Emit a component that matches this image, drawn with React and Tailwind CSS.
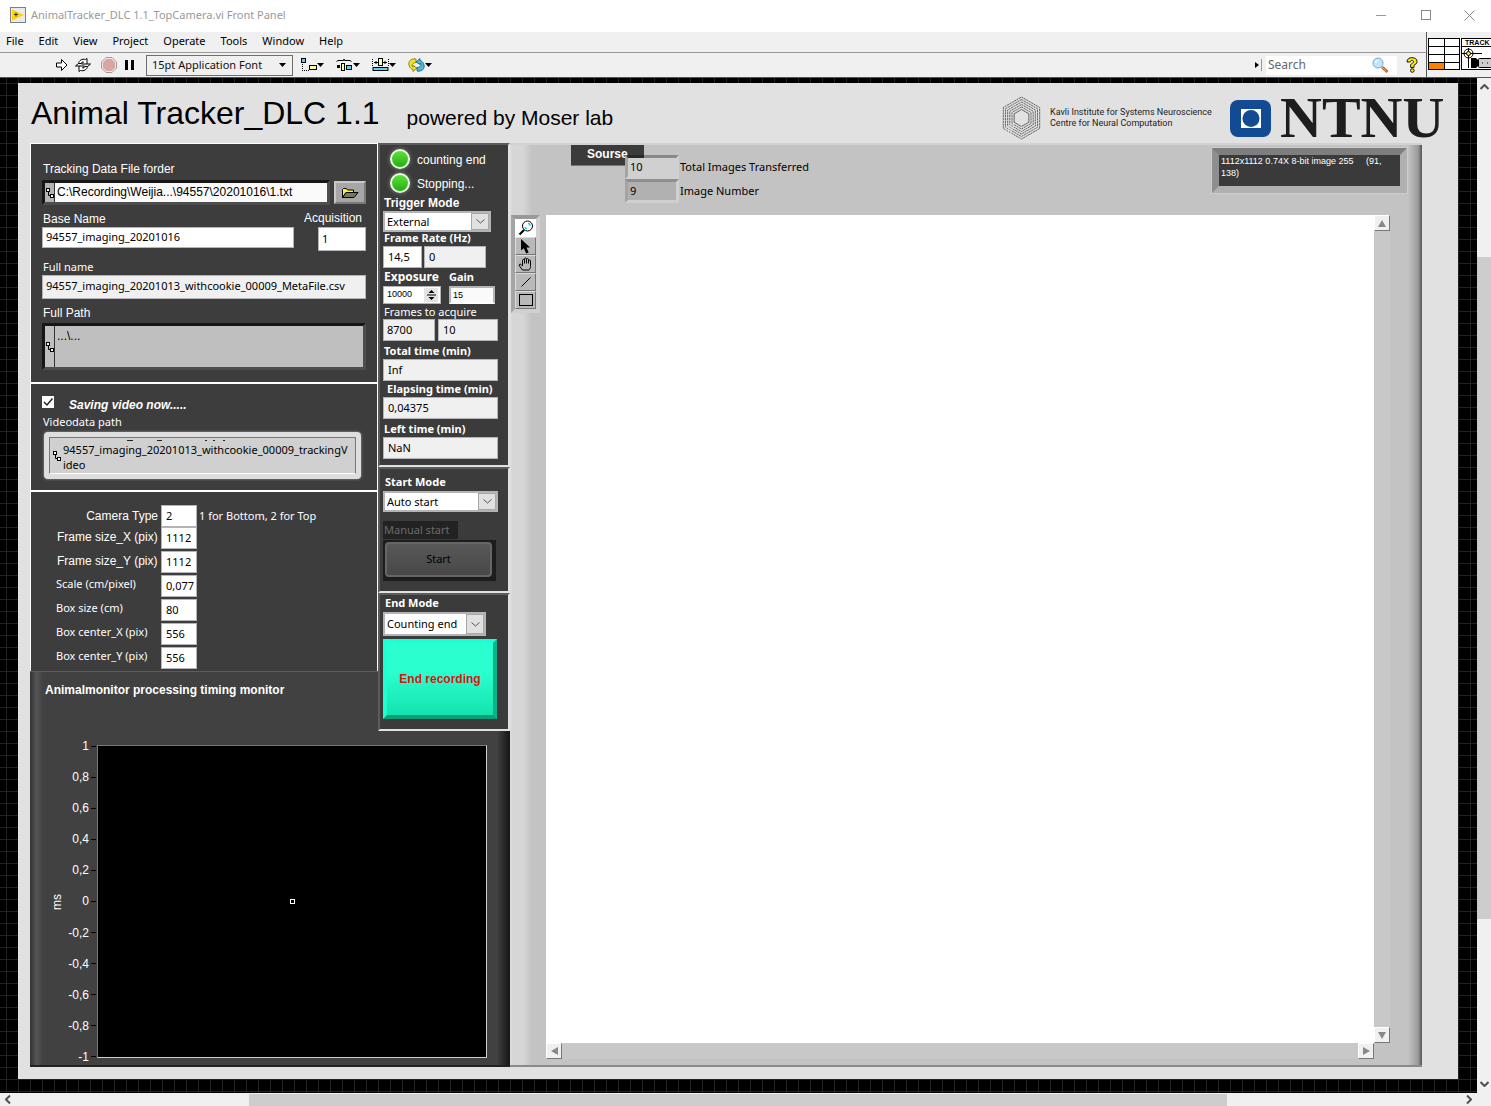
import React from "react";

const UI = "font-['Noto_Sans','Open_Sans',sans-serif]";
const ARIAL = "font-['Liberation_Sans',Arial,sans-serif]";

function TextField({ label, value, className = "", readOnly = false }) {
  return (
    <input
      aria-label={label}
      defaultValue={value}
      readOnly={readOnly}
      className={`min-w-0 rounded-none border border-[#b4b4b8] pb-0.5 text-[11px] text-black outline-none ${readOnly ? "bg-[#f0f0f0]" : "bg-white"} ${className}`}
    />
  );
}

function Select({ id, value, className = "" }) {
  return (
    <div className={`relative flex border-2 border-[#b4b4b8] bg-white ${className}`}>
      <select id={id} defaultValue={value} className="min-h-0 w-full appearance-none bg-white pl-0.5 text-[11px] leading-4 text-black outline-none">
        <option>{value}</option>
      </select>
      <span className="pointer-events-none absolute inset-y-0 right-0 flex w-[18px] items-center justify-center border border-[#a8a8a8] bg-[#e1e1e1]">
        <svg width="9" height="5" viewBox="0 0 9 5" fill="none" stroke="#555">
          <path d="M.5 .5 4.500 4 8.500 .5" />
        </svg>
      </span>
    </div>
  );
}

function PathGlyph() {
  return (
    <svg width="8" height="12" viewBox="0 0 8 12" fill="#fff" stroke="#000" className="shrink-0">
      <path d="M2.500 4v4.500H5" fill="none" />
      <rect x=".5" y="1.500" width="3" height="3" />
      <rect x="4.500" y="7.500" width="3" height="3" />
    </svg>
  );
}

function DropArrow() {
  return (
    <svg width="7" height="4" viewBox="0 0 7 4">
      <path d="M0 0h7L3.500 4z" />
    </svg>
  );
}

function TitleBar() {
  return (
    <header className="flex h-8 items-center bg-white pb-0.5 pl-2.5">
      <svg width="16" height="16" viewBox="0 0 16 16">
        <rect x=".5" y=".5" width="15" height="15" fill="#e9e9ee" stroke="#7c7f88" />
        <path d="M2 2.500 14 8 2 13.500z" fill="#ffd200" />
        <path d="M4 7.500h4M6 5.500v4" stroke="#333" />
      </svg>
      <h1 className="ml-[5px] text-[11px] text-[#999]">AnimalTracker_DLC 1.1_TopCamera.vi Front Panel</h1>
      <div className="ml-auto flex">
        <button aria-label="Minimize" className="flex h-[30px] w-[45px] items-center justify-center">
          <svg width="10" height="10" stroke="#999"><path d="M0 5.500h10" /></svg>
        </button>
        <button aria-label="Maximize" className="flex h-[30px] w-[45px] items-center justify-center">
          <svg width="10" height="10" stroke="#888" fill="none"><rect x=".5" y=".5" width="9" height="9" /></svg>
        </button>
        <button aria-label="Close" className="flex h-[30px] w-[43px] items-center justify-center">
          <svg width="11" height="11" stroke="#888"><path d="M.5 .5l10 10M10.500 .5l-10 10" /></svg>
        </button>
      </div>
    </header>
  );
}

function Toolbar() {
  return (
    <div className="flex h-6 items-center bg-[#f0f0f0] pl-14">
      <button aria-label="Run" className="flex">
        <svg width="12" height="14" viewBox="0 0 12 14" fill="#fff" stroke="#000">
          <path d="M.5 5h5V1.500L11 7 5.500 12.500V9H.5z" />
        </svg>
      </button>
      <button aria-label="Run continuously" className="ml-[7px] flex">
        <svg width="16" height="14" viewBox="0 0 16 14" fill="#fff" stroke="#000">
          <path d="M3.500 5.500C4 2.500 7 .5 10.500 1.500L12 .5V6H6.500L8.500 4C7.500 3.500 6.500 4.500 6 5.500z" />
          <path d="M12.500 8.500C12 11.500 9 13.500 5.500 12.500L4 13.500V8H9.500L7.500 10c1 .5 2-.5 2.500-1.500z" />
          <path d="M3.500 5.500.5 8H4M12.500 8.500 15.500 6H12" />
        </svg>
      </button>
      <button aria-label="Abort execution" className="ml-[10px] flex">
        <svg width="16" height="16" viewBox="0 0 16 16">
          <path d="M5 .5h6L15.500 5v6L11 15.500H5L.5 11V5z" fill="#f4e4e4" stroke="#a09a9a" />
          <path d="M5.500 2h5L14 5.500v5L10.500 14h-5L2 10.500v-5z" fill="#d8a4a4" />
        </svg>
      </button>
      <button aria-label="Pause" className="ml-2 flex gap-[3px]">
        <span className="h-2.5 w-[3px] bg-black" />
        <span className="h-2.5 w-[3px] bg-black" />
      </button>
      <div className="relative ml-3 flex h-[21px] w-[147px] border border-[#6e6e6e]">
        <select aria-label="Font" className="w-full appearance-none bg-[#f0f0f0] pl-[5px] text-[11px] leading-[18px] text-[#111] outline-none">
          <option>15pt Application Font</option>
        </select>
        <span className="pointer-events-none absolute inset-y-0 right-1.5 flex items-center"><DropArrow /></span>
      </div>
      <button aria-label="Align objects" className="ml-2 flex items-center">
        <svg width="16" height="14" viewBox="0 0 16 14">
          <path d="M1.500 6v8M3 12.500h5" stroke="#000" strokeDasharray="1 1" />
          <rect x=".5" y=".5" width="4" height="4" fill="#6ce" stroke="#000" />
          <rect x="8.500" y="7.500" width="7" height="4" fill="#ff9" stroke="#000" />
        </svg>
        <DropArrow />
      </button>
      <button aria-label="Distribute objects" className="ml-3 flex items-center">
        <svg width="17" height="14" viewBox="0 0 17 14">
          <path d="M.5 3.500 2 2.500h5.500L8 1l.5 1.500H14l1.500 1" fill="none" stroke="#000" />
          <rect x="1" y="7" width="3" height="3" />
          <rect x="5.500" y="5.500" width="3" height="7" fill="#ff9" stroke="#000" />
          <rect x="10.500" y="7.500" width="5" height="4" fill="#6ce" stroke="#000" />
        </svg>
        <DropArrow />
      </button>
      <button aria-label="Resize objects" className="ml-3 flex items-center">
        <svg width="17" height="14" viewBox="0 0 17 14">
          <path d="M.5 1v8M16.500 1v8" stroke="#000" strokeDasharray="1 1" />
          <path d="M2 4.500h4M11 4.500h4M4 3v3M13 3v3" stroke="#000" />
          <rect x="6.500" y=".5" width="4" height="7" fill="#ff9" stroke="#000" />
          <rect x="1" y="9.500" width="15" height="3" fill="#6ce" stroke="#000" />
        </svg>
        <DropArrow />
      </button>
      <button aria-label="Reorder" className="ml-3 flex items-center">
        <svg width="17" height="14" viewBox="0 0 17 14">
          <path d="M8 1C3 0 0 3.500 1 7s3 4.500 4 4.500V13.500L9 10 5 7.500V9C3.500 8 3.500 5 8 4.500z" fill="#f4e21c" stroke="#776b00" strokeWidth=".8" />
          <path d="M9 13c5 1 8-2.500 7-6s-3-4.500-4-4.500V.5L8 4l4 2.500V5c1.500 1 1.500 4-3 4.500z" fill="#4cb8d8" stroke="#155a70" strokeWidth=".8" />
        </svg>
        <DropArrow />
      </button>
      <div className="ml-auto flex items-center pr-2">
        <svg width="4" height="6"><path d="M0 0v6l4-3z" /></svg>
        <span className="mr-1 ml-0.5 h-3 w-px bg-[#999]" />
        <div className="flex h-[19px] w-[131px] items-center bg-white pr-2">
          <input aria-label="Search" placeholder="Search" className="w-full min-w-0 pl-0.5 text-[12px] outline-none placeholder:text-[#666]" />
          <svg width="17" height="17" viewBox="0 0 17 17" className="shrink-0">
            <path d="M10 10l5.500 5" stroke="#b0622c" strokeWidth="3" />
            <path d="M9.500 9.500l5 5" stroke="#f0b080" strokeWidth="1" />
            <circle cx="6" cy="6" r="5" fill="#bfe6fb" stroke="#7da7c6" />
            <path d="M3.500 6A2.500 2.500 0 0 1 6 3.500" stroke="#fff" fill="none" />
          </svg>
        </div>
        <button aria-label="Help" className="ml-[9px] flex">
          <svg width="12" height="16" viewBox="0 0 12 16" fill="#ffec00" stroke="#000" strokeWidth=".9">
            <path d="M1 5C1 2 3 .7 6 .7S11 2 11 4.500 9.500 7 8 8.300V10.500H4.700V7.500C6 6.500 7.500 6 7.500 4.500S4.300 3 4.300 5z" />
            <circle cx="6.300" cy="13.500" r="1.800" />
          </svg>
        </button>
      </div>
    </div>
  );
}

function VIIcon() {
  return (
    <div className="flex w-[65px] shrink-0 items-start border-l border-[#555] bg-[#f0f0f0] pt-1.5 pl-px">
      <svg width="63" height="33" viewBox="0 0 63 33" className="block">
        <rect x=".5" y=".5" width="31" height="31" fill="#fff" stroke="#000" />
        <rect x="1" y="25" width="15" height="6" fill="#ff8000" />
        <path d="M.5 8.500h31M.5 16.500h31M.5 24.500h31M16.500 .5v31M0 31.500h32" stroke="#000" />
        <rect x="33.500" y=".5" width="31" height="31" fill="#fff" stroke="#000" />
        <path d="M33 8.500h31M34 15.500h20M40.500 10v20" stroke="#000" />
        <circle cx="40.500" cy="15.500" r="4.500" fill="none" stroke="#000" />
        <circle cx="40.500" cy="15.500" r="2" fill="#ffe45c" stroke="#000" />
        <path d="M43 20h5l2 2v6l-2 2h-5z" />
        <rect x="50.500" y="20.500" width="13" height="9" rx="1" fill="#ccc" stroke="#000" />
        <path d="M54 25h1M59 25h1" stroke="#000" />
        <text x="37" y="7" fontSize="7" fontWeight="bold" fontFamily="Liberation Sans, sans-serif">TRACK</text>
      </svg>
    </div>
  );
}

function KavliLogo() {
  const rings = [21, 18.5, 16, 13.5, 11, 8.5];
  const hex = (r) =>
    [90, 30, -30, -90, -150, 150]
      .map((a) => `${20.5 + r * Math.cos((a * Math.PI) / 180)},${22 - r * Math.sin((a * Math.PI) / 180)}`)
      .join(" ");
  return (
    <svg width="41" height="44" viewBox="0 0 41 44" fill="none" stroke="#555" strokeWidth=".9">
      {rings.map((r) => (
        <polygon key={r} points={hex(r)} strokeDasharray={r > 9 ? "2.2 .6" : "none"} />
      ))}
      <path d="M5 31v5M7.500 30v7M10 28v10M12.500 27v6" stroke="#e1e1e1" />
    </svg>
  );
}

function PanelHeader() {
  return (
    <div className="flex h-[60px] items-center pl-px">
      <h2 className="text-[32px] leading-[60px] text-black">Animal Tracker_DLC 1.1</h2>
      <p className="ml-[27px] pt-2.5 text-[21px] text-black">powered by Moser lab</p>
      <div className="ml-auto flex items-center pt-2.5">
        <KavliLogo />
        <p className="ml-2 w-[180px] font-['Roboto',sans-serif] text-[9px] leading-[11px] whitespace-nowrap text-[#222]">
          Kavli Institute for Systems Neuroscience
          <br />
          Centre for Neural Computation
        </p>
        <svg width="41" height="37" viewBox="0 0 41 37">
          <rect width="41" height="37" rx="8" fill="#124a93" />
          <rect x="11" y="9" width="20" height="19" fill="#fff" />
          <circle cx="21" cy="18.500" r="8.500" fill="#124a93" />
        </svg>
        <span className="ml-[9px] w-[178px] font-['Liberation_Serif',serif] text-[58px] leading-[40px] font-bold text-[#1d1d1d]">NTNU</span>
      </div>
    </div>
  );
}

const whiteField = "border border-[#b4b4b8] bg-white pb-0.5 text-[11px] text-black outline-none";

function FileSettings() {
  return (
    <section className="border-t border-r border-b-2 border-l border-white bg-[#3d3d3d] pt-[18px] pr-[11px] pb-3 pl-[11px] text-white">
      <label htmlFor="folder" className={`block h-3.5 pl-px text-[12px] leading-[14px] ${ARIAL}`}>Tracking Data File forder</label>
      <div className="mt-1 flex items-center">
        <div className="flex h-[25px] flex-1 border-[3px] border-t-[#161616] border-r-[#4d4d4d] border-b-[#4d4d4d] border-l-[#161616] bg-[#b4b4b4]">
          <span className="flex w-[10px] shrink-0 items-center justify-center border-r border-[#333]"><PathGlyph /></span>
          <input id="folder" defaultValue="C:\Recording\Weijia...\94557\20201016\1.txt" className={`w-full min-w-0 bg-[#fafafa] pb-0.5 pl-0.5 text-[12px] text-black outline-none ${ARIAL}`} />
        </div>
        <button aria-label="Browse" className="ml-1 flex h-[23px] w-8 items-center justify-center border-2 border-t-[#c8c8c8] border-r-[#7a7a7a] border-b-[#7a7a7a] border-l-[#c8c8c8] bg-[#a6a6a6]">
          <svg width="18" height="12" viewBox="0 0 18 12" stroke="#000">
            <path d="M1.500 10.500v-8l1-1h3l1 1.500h6v2.500H5z" fill="#ffee3a" />
            <path d="M1.500 10.500 5 5.500h12l-4 5z" fill="#777a50" />
          </svg>
        </button>
      </div>
      <div className="mt-1.5 flex items-start justify-between">
        <div>
          <label htmlFor="base" className={`block h-4 pl-px text-[12px] leading-4 ${ARIAL}`}>Base Name</label>
          <input id="base" defaultValue="94557_imaging_20201016" className={`block h-[21px] w-[252px] pl-[3px] ${whiteField}`} />
        </div>
        <div className="flex flex-col items-end">
          <label htmlFor="acq" className={`block h-4 pr-1 text-[12px] leading-[14px] ${ARIAL}`}>Acquisition</label>
          <input id="acq" defaultValue="1" className={`block h-6 w-12 pl-[3px] ${whiteField}`} />
        </div>
      </div>
      <label htmlFor="full" className="mt-2 block h-4 pl-px text-[11px] leading-4">Full name</label>
      <input id="full" readOnly defaultValue="94557_imaging_20201013_withcookie_00009_MetaFile.csv" className="block h-6 w-full border border-[#b4b4b8] bg-[#f0f0f0] pb-[3px] pl-[3px] text-[11px] text-black outline-none" />
      <label htmlFor="fullpath" className={`mt-1.5 block h-[18px] pl-px text-[12px] leading-4 ${ARIAL}`}>Full Path</label>
      <div className="flex h-[47px] border-[3px] border-t-[#161616] border-r-[#4d4d4d] border-b-[#4d4d4d] border-l-[#161616] bg-[#bfbfbf]">
        <span className="flex w-[10px] shrink-0 items-center justify-center border-r border-[#333]"><PathGlyph /></span>
        <textarea id="fullpath" readOnly defaultValue="...\..." className={`w-full resize-none bg-transparent pt-0.5 pl-0.5 text-[12px] leading-4 text-black outline-none ${ARIAL}`} />
      </div>
    </section>
  );
}

function VideoSettings() {
  return (
    <section className="border-r border-b-2 border-l border-white bg-[#3d3d3d] pt-3 pr-4 pb-2.5 pl-[11px] text-white">
      <label className="flex h-[18px] items-center">
        <span className="relative -mt-1.5 flex">
          <input type="checkbox" defaultChecked className="peer h-3 w-3 appearance-none bg-white" />
          <svg width="12" height="12" viewBox="0 0 12 12" fill="none" stroke="#222" strokeWidth="1.500" className="pointer-events-none absolute inset-0 hidden peer-checked:block">
            <path d="M2 6l3 3 5.500-6.500" />
          </svg>
        </span>
        <span className={`ml-[15px] text-[12px] font-bold italic ${ARIAL}`}>Saving video now.....</span>
      </label>
      <label htmlFor="video" className="block h-[18px] pl-px text-[11px] leading-4">Videodata path</label>
      <div className="ml-0.5 flex h-[47px] items-stretch rounded-sm border-[5px] border-[#dedede] bg-[#d0d0d0] shadow-[0_0_3px_#999]">
        <div className="flex flex-1 items-center border border-t-[#777] border-r-[#777] border-b-white border-l-[#777]">
          <span className="flex w-[13px] shrink-0 justify-center"><PathGlyph /></span>
          <div className="flex min-w-0 flex-1 flex-col">
            <svg width="180" height="2" stroke="#222"><path d="M64 .5h6M94 .5h5M142 .5h2M150 .5h2M160 .5h2" /></svg>
            <textarea id="video" readOnly rows={2} defaultValue={"94557_imaging_20201013_withcookie_00009_trackingV\nideo"} className="block w-full resize-none overflow-hidden bg-transparent text-[11px] leading-[15px] whitespace-pre text-black outline-none" />
          </div>
        </div>
      </div>
      <div className="h-px" />
    </section>
  );
}

const cameraRows = [
  { label: "Frame size_X (pix)", value: "1112", arial: true },
  { label: "Frame size_Y (pix)", value: "1112", arial: true },
  { label: "Scale (cm/pixel)", value: "0,077" },
  { label: "Box size (cm)", value: "80" },
  { label: "Box center_X (pix)", value: "556" },
  { label: "Box center_Y (pix)", value: "556" },
];

function CameraSettings() {
  return (
    <section className="border-r border-l border-white bg-[#3d3d3d] pt-[13px] pb-0.5 text-white">
      <div className="flex h-[22px] items-center">
        <label htmlFor="camtype" className={`w-[130px] pr-[3px] text-right text-[12px] ${ARIAL}`}>Camera Type</label>
        <input id="camtype" defaultValue="2" className={`h-[22px] w-9 pl-1 ${whiteField}`} />
        <span className="ml-0.5 text-[11px]">1 for Bottom, 2 for Top</span>
      </div>
      <div className="flex flex-col gap-0.5">
        {cameraRows.map((r) => (
          <label key={r.label} className="flex h-[22px] items-center">
            <span className={r.arial ? `w-[130px] pb-0.5 pl-[26px] text-[12px] ${ARIAL}` : "w-[130px] pb-1 pl-[25px] text-[11px]"}>{r.label}</span>
            <input defaultValue={r.value} className={`h-[22px] w-9 pl-1 ${whiteField}`} />
          </label>
        ))}
      </div>
    </section>
  );
}

const boxBevel = "border-2 border-t-[#5c5c5c] border-r-[#e1e1e1] border-b-[#e1e1e1] border-l-[#5c5c5c] bg-[#3b3b3b] pl-[3px] pr-[9px]";

function Led({ children }) {
  return (
    <div className="flex h-6 items-center">
      <span className="ml-[7px] h-5 w-5 rounded-full border-2 border-[#e8ffe0] bg-linear-to-b from-[#5fe03c] to-[#1fae10] shadow-[0_0_4px_#8a8a8a]" />
      <span className={`ml-[7px] pt-0.5 text-[12px] ${ARIAL}`}>{children}</span>
    </div>
  );
}

function AcquisitionColumn() {
  return (
    <div className="z-10 col-start-2 row-span-2 row-start-1 self-start text-white">
      <section className={`${boxBevel} pb-1.5`}>
        <div className="pt-[2px]">
          <Led>counting end</Led>
          <Led>Stopping...</Led>
        </div>
        <label htmlFor="trigger" className={`block h-4 pl-px text-[12px] leading-4 font-bold ${ARIAL}`}>Trigger Mode</label>
        <Select id="trigger" value="External" className="h-[21px] w-[108px]" />
        <p className="h-3.5 pl-px text-[11px] leading-3 font-bold">Frame Rate (Hz)</p>
        <div className="flex gap-0.5">
          <TextField label="Frame rate" value="14,5" className="h-[22px] w-[39px] pl-1" />
          <TextField label="Measured frame rate" value="0" readOnly className="h-[22px] w-[62px] pl-1" />
        </div>
        <div className="flex h-[18px] gap-[10px] pl-px text-[12px] leading-[18px] font-bold">
          <label htmlFor="exposure" className="w-[55px]">Exposure</label>
          <label htmlFor="gain" className="text-[11px]">Gain</label>
        </div>
        <div className="flex gap-2">
          <div className="flex h-[18px] w-[58px] items-center border border-[#b4b4b8] bg-white">
            <input id="exposure" defaultValue="10000" className={`w-10 min-w-0 pl-[3px] text-[9px] text-black outline-none ${ARIAL}`} />
            <span className="flex h-3.5 w-3.5 items-center justify-center bg-[#e4e4e4]">
              <svg width="9" height="12" viewBox="0 0 9 12"><path d="M1.500 4 4.500 1l3 3zM1.500 8h6l-3 3zM0 5.500h9v1H0z" /></svg>
            </span>
          </div>
          <input id="gain" defaultValue="15" className={`h-[18px] w-[46px] border-2 border-[#b4b4b8] border-b-white bg-[#fafafa] pl-0.5 text-[9px] text-black outline-none ${ARIAL}`} />
        </div>
        <p className="h-[15px] pl-px text-[11px] leading-[15px]">Frames to acquire</p>
        <div className="flex gap-[3px]">
          <TextField label="Frames to acquire" value="8700" readOnly className="h-[22px] w-[52px] pl-[3px]" />
          <TextField label="Frames acquired" value="10" readOnly className="h-[22px] w-[60px] pl-1" />
        </div>
        <p className="h-[18px] pl-px text-[11px] leading-5 font-bold">Total time (min)</p>
        <TextField label="Total time (min)" value="Inf" readOnly className="block h-[22px] w-[115px] pl-1" />
        <p className="h-4 pl-1 text-[11px] leading-4 font-bold whitespace-nowrap">Elapsing time (min)</p>
        <TextField label="Elapsing time (min)" value="0,04375" readOnly className="block h-[22px] w-[115px] pl-1" />
        <p className="h-[18px] pl-px text-[11px] leading-5 font-bold">Left time (min)</p>
        <TextField label="Left time (min)" value="NaN" readOnly className="block h-[22px] w-[115px] pl-1" />
      </section>
      <section className={`${boxBevel} pb-2.5`}>
        <label htmlFor="startmode" className="block h-[22px] pl-0.5 text-[11px] leading-[26px] font-bold">Start Mode</label>
        <Select id="startmode" value="Auto start" className="h-[21px] w-[115px]" />
        <p className="mt-[9px] h-[18px] w-[75px] bg-[#222] pl-px text-[11px] leading-[18px] whitespace-nowrap text-[#6b6b6b]">Manual start</p>
        <div className="mt-px h-[41px] w-[113px] bg-[#1d1d1d] p-0.5 pr-1 pb-1">
          <button className="h-full w-full rounded-sm border-2 border-[#666] bg-linear-to-b from-[#585858] to-[#484848] text-[11px] text-black">Start</button>
        </div>
      </section>
      <section className={`${boxBevel} pb-2.5`}>
        <label htmlFor="endmode" className="block h-[17px] pl-0.5 text-[11px] leading-4 font-bold">End Mode</label>
        <Select id="endmode" value="Counting end" className="h-6 w-[103px]" />
        <button className={`mt-[3px] block h-[80px] w-[114px] border-[4px] border-t-[#1cffd0] border-r-[#0bb487] border-b-[#0b9d75] border-l-[#1cffd0] bg-linear-to-b from-[#2affcf] from-40% to-[#12e3ae] text-[12px] font-bold text-[#e01010] ${ARIAL}`}>
          End recording
        </button>
      </section>
    </div>
  );
}

const ticks = ["1", "0,8", "0,6", "0,4", "0,2", "0", "-0,2", "-0,4", "-0,6", "-0,8", "-1"];

function TimingChart() {
  return (
    <section className="col-span-2 col-start-1 row-start-2 flex border-t border-b-2 border-t-[#5c5c5c] border-b-[#222] bg-[#414141] text-white">
      <div className="w-[13px] shrink-0 bg-linear-to-r from-[#333] via-[#555] to-[#414141]" />
      <div className={`flex min-w-0 flex-1 flex-col ${ARIAL}`}>
        <h3 className="mt-2.5 ml-0.5 h-[63px] text-[12px] leading-4 font-bold">Animalmonitor processing timing monitor</h3>
        <div className="flex flex-1 pb-[7px]">
          <div className="flex w-7 items-center justify-center">
            <span className="-rotate-90 text-[12px]">ms</span>
          </div>
          <div className="flex w-[25px] flex-col justify-between py-px">
            {ticks.map((t) => (
              <div key={t} className="flex h-0 items-center justify-end gap-0.5 text-[12px] whitespace-nowrap">
                {t}
                <span className="h-px w-[5px] shrink-0 bg-black" />
              </div>
            ))}
          </div>
          <div className="ml-px flex flex-1 items-center justify-center border border-t-[#777] border-r-[#ccc] border-b-[#ccc] border-l-[#777] bg-black">
            <span className="h-[5px] w-[5px] border border-white" />
          </div>
          <div className="w-[10px]" />
        </div>
      </div>
      <div className="w-[13px] shrink-0 bg-linear-to-r from-[#414141] to-[#161616]" />
    </section>
  );
}

const toolBtn = "flex h-[18px] w-full items-center justify-center border border-t-[#ddd] border-r-[#777] border-b-[#777] border-l-[#ddd] bg-[#b9b9b9]";

function ToolPalette() {
  return (
    <div className="mt-[70px] mr-1.5 flex w-[29px] flex-col self-start border-4 border-t-[#999] border-r-[#d0d0d0] border-b-[#d0d0d0] border-l-[#a4a4a4]">
      <button aria-label="Zoom" className="flex h-[18px] items-center justify-center bg-white">
        <svg width="16" height="16" viewBox="0 0 16 16" fill="none">
          <circle cx="9.500" cy="6" r="5" stroke="#000" />
          <path d="M10 3.500c1 0 2 1 2 2M7 7c.3.800 1 1.500 2 1.700" stroke="#00d8e8" strokeWidth="1.500" />
          <path d="M6 10l-4.500 4.500" stroke="#000" strokeWidth="2.200" />
        </svg>
      </button>
      <button aria-label="Select" className={toolBtn}>
        <svg width="12" height="15" viewBox="0 0 12 15"><path d="M1 0v11.500l2.800-2.300 2.400 5.300 2.500-1L6.500 8.500H10z" /></svg>
      </button>
      <button aria-label="Pan" className={toolBtn}>
        <svg width="15" height="14" viewBox="0 0 15 14" fill="none" stroke="#000">
          <path d="M4 12.500 1 8.500C0 7 1.500 6 2.500 7L4 8.500V3c0-1.500 2-1.500 2 0V1.500c0-1.300 2-1.300 2 0V2c0-1.300 2-1.300 2 0v1.500c0-1.300 2-1.300 2 0V9c0 1.500-.5 2.500-1.500 3.500zM6 2.500V6M8 2v4M10 3v3" transform="translate(.5 .5)" />
        </svg>
      </button>
      <button aria-label="Line" className={toolBtn}>
        <svg width="10" height="10" stroke="#000"><path d="M.5 9.500l9-9" /></svg>
      </button>
      <button aria-label="Rectangle" className={toolBtn}>
        <svg width="14" height="12" fill="none" stroke="#000"><rect x=".5" y=".5" width="13" height="11" /></svg>
      </button>
    </div>
  );
}

const arrowBtn = "flex h-4 w-4 shrink-0 items-center justify-center border border-t-white border-r-[#777] border-b-[#777] border-l-white bg-[#f0f0f0]";

function ImagePanel() {
  return (
    <section className="flex min-w-0 flex-1 border-t-2 border-b-2 border-t-[#d2d2d2] border-b-[#8a8a8a] bg-[linear-gradient(to_right,#e1e1e1_0,#d6d6d6_2px,#d6d6d6_13px,#c3c3c3_22px,#c3c3c3_calc(100%-14px),#9a9a9a_calc(100%-4px),#555_100%)] pr-8 pl-px">
      <ToolPalette />
      <div className="flex min-w-0 flex-1 flex-col pb-1.5">
        <div className="flex h-[70px] items-start">
          <div className={`ml-[25px] h-[21px] w-[73px] border-b border-[#777] bg-[#3b3b3b] pl-4 text-[12px] leading-[18px] font-bold text-white ${ARIAL}`}>Sourse</div>
          <div className="relative mt-2.5 -ml-[19px] flex flex-col text-[11px] text-black">
            <label className="flex h-6 items-center">
              <input readOnly defaultValue="10" className="h-6 w-[54px] border-[3px] border-t-black/30 border-r-[#d0d0d0] border-b-[#d0d0d0] border-l-[#a4a4a4] bg-[#d0d0d0] bg-clip-padding pb-0.5 pl-0.5 outline-none" />
              <span className="ml-px">Total Images Transferred</span>
            </label>
            <label className="flex h-6 items-center">
              <input readOnly defaultValue="9" className="h-6 w-[54px] border-[3px] border-t-[#8f8f8f] border-r-[#d0d0d0] border-b-[#d0d0d0] border-l-[#a4a4a4] bg-[#b1b1b1] pb-0.5 pl-0.5 outline-none" />
              <span className="ml-px">Image Number</span>
            </label>
          </div>
          <div className={`mt-[3px] -mr-[17px] ml-auto h-[45px] w-[195px] border-[7px] border-t-[#7e7e7e] border-r-[#b0b0b0] border-b-[#b0b0b0] border-l-[#8e8e8e] bg-[#3a3a3a] pl-0.5 text-[9px] leading-3 whitespace-pre-wrap text-white outline outline-[#cdcdcd] ${ARIAL}`}>
            {"1112x1112 0.74X 8-bit image 255     (91,\n138)"}
          </div>
        </div>
        <div className="flex flex-1">
          <div className="flex-1 bg-white" />
          <div className="flex w-4 flex-col justify-between bg-[#c8c8c8]">
            <button aria-label="Scroll up" className={arrowBtn}><svg width="8" height="7" fill="#888"><path d="M0 7h8L4 0z" /></svg></button>
            <button aria-label="Scroll down" className={arrowBtn}><svg width="8" height="7" fill="#888"><path d="M0 0h8L4 7z" /></svg></button>
          </div>
        </div>
        <div className="mr-4 flex h-4 justify-between bg-[#c8c8c8]">
          <button aria-label="Scroll left" className={arrowBtn}><svg width="7" height="8" fill="#888"><path d="M7 0v8L0 4z" /></svg></button>
          <button aria-label="Scroll right" className={arrowBtn}><svg width="7" height="8" fill="#888"><path d="M0 0v8l7-4z" /></svg></button>
        </div>
      </div>
    </section>
  );
}

export default function App() {
  return (
    <div className={`flex min-h-screen flex-col bg-white text-black ${UI}`}>
      <TitleBar />
      <div className="flex border-b border-[#555] bg-[#f0f0f0]">
        <div className="min-w-0 flex-1">
          <nav className="flex h-[21px] items-center gap-[15px] border-b border-[#999] pb-0.5 pl-1.5 text-[11px]">
            {["File", "Edit", "View", "Project", "Operate", "Tools", "Window", "Help"].map((m) => (
              <button key={m}>{m}</button>
            ))}
          </nav>
          <Toolbar />
        </div>
        <VIIcon />
      </div>
      <div className="flex flex-1">
        <main className="flex min-w-0 flex-1 bg-black bg-[linear-gradient(to_right,#222_1px,transparent_1px),linear-gradient(to_bottom,#222_1px,transparent_1px)] bg-[size:12px_12px] bg-[position:6px_5px] pt-[5px] pr-[19px] pb-[14px] pl-[18px]">
          <div className="flex min-w-0 flex-1 flex-col bg-[#e1e1e1] pb-3 pl-3">
            <div className={ARIAL}><PanelHeader /></div>
            <div className="flex flex-1 pr-9">
              <div className="grid w-[480px] shrink-0 grid-cols-[348px_132px] grid-rows-[auto_1fr]">
                <div className="col-start-1 row-start-1">
                  <FileSettings />
                  <VideoSettings />
                  <CameraSettings />
                </div>
                <AcquisitionColumn />
                <TimingChart />
              </div>
              <ImagePanel />
            </div>
          </div>
        </main>
        <div className="flex w-[14px] shrink-0 flex-col items-center justify-between bg-[#f0f0f0] py-1.5">
          <svg width="9" height="6" fill="none" stroke="#505050" strokeWidth="2"><path d="M.5 5 4.500 1l4 4" /></svg>
          <div className="mt-[167px] mb-[162px] w-full flex-1 bg-[#cdcdcd]" />
          <svg width="9" height="6" fill="none" stroke="#505050" strokeWidth="2"><path d="M.5 1l4 4 4-4" /></svg>
        </div>
      </div>
      <div className="flex h-[13px] items-center bg-[#f0f0f0] pr-[19px] pl-[5px]">
        <svg width="6" height="9" fill="none" stroke="#505050" strokeWidth="2"><path d="M5 .5l-4 4 4 4" /></svg>
        <div className="mr-[239px] ml-[238px] h-3 flex-1 bg-[#cdcdcd]" />
        <svg width="6" height="9" fill="none" stroke="#505050" strokeWidth="2"><path d="M1 .5l4 4-4 4" /></svg>
      </div>
    </div>
  );
}
